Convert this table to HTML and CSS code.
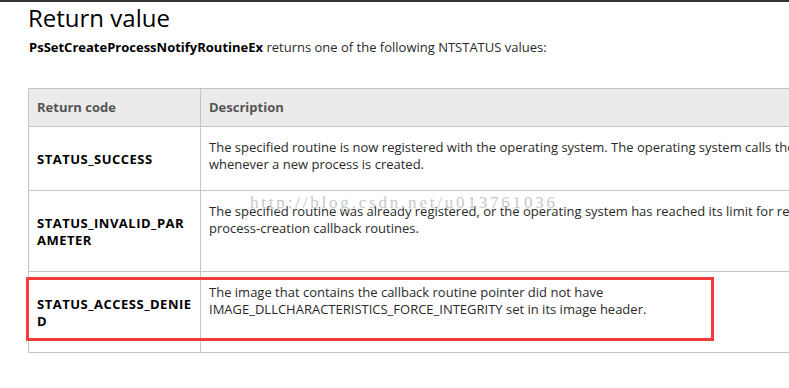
FILE: index.html
```html
<!DOCTYPE html>
<html lang="en">
<head>
    <meta charset="UTF-8">
    <title>PsSetCreateProcessNotifyRoutineEx - Return value</title>
    <link rel="stylesheet" href="styles.css">
</head>
<body>
    <div class="topbar"></div>
    <div class="content">
        <h1>Return value</h1>
        <p class="intro"><strong>PsSetCreateProcessNotifyRoutineEx</strong> returns one of the following NTSTATUS values:</p>

        <table class="codes">
            <thead>
                <tr>
                    <th class="col-code">Return code</th>
                    <th class="col-desc">Description</th>
                </tr>
            </thead>
            <tbody>
                <tr>
                    <td class="code"><p>STATUS_SUCCESS</p></td>
                    <td class="desc">The specified routine is now registered with the operating system. The operating system calls the routine whenever a new process is created.</td>
                </tr>
                <tr>
                    <td class="code"><p>STATUS_INVALID_PARAMETER</p></td>
                    <td class="desc">The specified routine was already registered, or the operating system has reached its limit for registering process-creation callback routines.</td>
                </tr>
                <tr>
                    <td class="code"><p>STATUS_ACCESS_DENIED</p></td>
                    <td class="desc">The image that contains the callback routine pointer did not have IMAGE_DLLCHARACTERISTICS_FORCE_INTEGRITY set in its image header.</td>
                </tr>
            </tbody>
        </table>

        <div class="watermark">http://blog.csdn.net/u013761036</div>
        <div class="highlight"></div>
    </div>
</body>
</html>
```

FILE: styles.css
```css
body {
    margin: 0;
    padding: 0;
    background-color: #fff;
    color: #1e1e1e;
    font-family: 'Open Sans', sans-serif;
    font-size: 13px;
    overflow: hidden;
}

.topbar {
    height: 2px;
    background-color: #333;
}

.content {
    position: relative;
    padding-left: 28px;
}

h1 {
    margin: 0;
    padding-top: 1px;
    font-size: 24px;
    font-weight: 400;
    line-height: 30px;
    color: #000;
}

.intro {
    margin: 5px 1px 0;
    line-height: 18px;
    color: #2a2a2a;
}

.intro strong {
    color: #000;
}

.codes {
    width: 840px;
    margin-top: 32px;
    border-collapse: collapse;
    table-layout: fixed;
}

.codes th,
.codes td {
    border: 1px solid #c4c4c4;
    padding: 12px 8px 10px;
    line-height: 17px;
    text-align: left;
}

.codes th {
    background-color: #ebebeb;
    color: #555;
    font-weight: 700;
    padding: 10px 8px;
}

.col-code {
    width: 155px;
}

.codes td.code {
    vertical-align: middle;
    font-weight: 700;
    letter-spacing: 0.5px;
    color: #000;
    word-break: break-all;
}

.codes td.code p {
    margin: 12px 0;
}

.codes td.desc {
    vertical-align: top;
    color: #2a2a2a;
}

.watermark {
    position: absolute;
    left: 250px;
    top: 191px;
    font-family: 'Liberation Serif', serif;
    font-size: 17px;
    letter-spacing: 2.8px;
    color: #c8c8c8;
}

.highlight {
    position: absolute;
    left: 26px;
    top: 275px;
    width: 682px;
    height: 58px;
    border: 3px solid #f23b3b;
}
```
